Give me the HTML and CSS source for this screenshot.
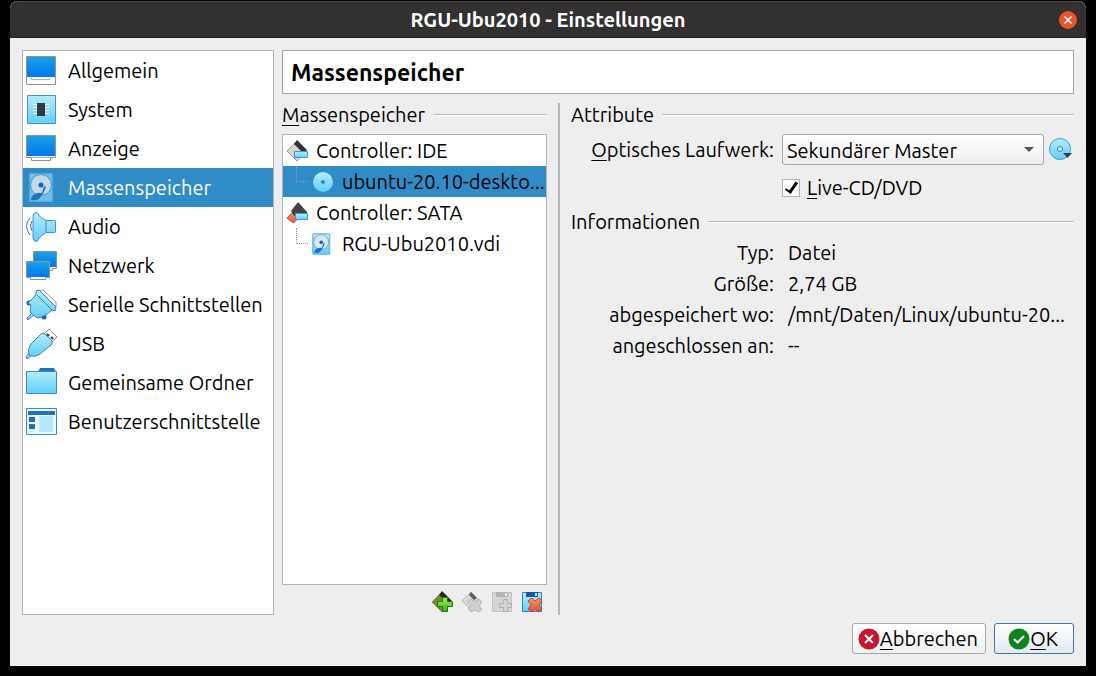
FILE: index.html
```html
<!DOCTYPE html>
<html lang="de">
<head>
  <meta charset="utf-8"/>
  <title>RGU-Ubu2010 - Einstellungen</title>
  <link rel="stylesheet" href="styles.css">
</head>
<body>

<!-- shared gradients and symbols -->
<svg class="defs" width="0" height="0" aria-hidden="true">
  <defs>
    <linearGradient id="screen" x1="0" y1="0" x2="0" y2="1"><stop offset="0" stop-color="#1ba0e4"/><stop offset="1" stop-color="#0078f0"/></linearGradient>
    <linearGradient id="light" x1="0" y1="0" x2="0" y2="1"><stop offset="0" stop-color="#b4ecfb"/><stop offset="1" stop-color="#62cffa"/></linearGradient>
    <linearGradient id="green" x1="0" y1="0" x2="0" y2="1"><stop offset="0" stop-color="#a2ee55"/><stop offset="1" stop-color="#3fae12"/></linearGradient>
    <linearGradient id="red" x1="0" y1="0" x2="0" y2="1"><stop offset="0" stop-color="#ff9468"/><stop offset="1" stop-color="#e5502c"/></linearGradient>
    <symbol id="disk" viewBox="0 0 32 32">
      <rect x="4" y="1" width="24" height="29" rx="1" fill="url(#light)" stroke="#3d8fce"/>
      <circle cx="16" cy="13" r="10.500" fill="#d5e8f4" stroke="#5c9cd0"/>
      <circle cx="16" cy="13" r="2.500" fill="#1d62ae"/>
      <path d="M21 15l-3 7-4 5q-4 2-8 1 0-4 4-6 4-2 7-1l2-7z" fill="#2272c3"/>
    </symbol>
    <symbol id="disk-selected" viewBox="0 0 32 32">
      <rect x="4" y="1" width="24" height="29" rx="1" fill="#70bee6" stroke="#3a8dcc"/>
      <circle cx="16" cy="13" r="10.500" fill="#c2d9e8" stroke="#5295c8"/>
      <circle cx="16" cy="13" r="2.500" fill="#1d62ae"/>
      <path d="M21 15l-3 7-4 5q-4 2-8 1 0-4 4-6 4-2 7-1l2-7z" fill="#2272c3"/>
    </symbol>
  </defs>
</svg>

<div class="window">
  <header class="titlebar">
    <h1>RGU-Ubu2010 - Einstellungen</h1>
    <button class="close" aria-label="Schließen">
      <svg width="18" height="18" viewBox="0 0 18 18"><circle cx="9" cy="9" r="9" fill="#e9542a"/><path d="M5.500 5.500l7 7m0-7l-7 7" stroke="#fff" stroke-width="1.500"/></svg>
    </button>
  </header>

  <div class="content">
    <nav class="sidebar">
      <button class="nav-item">
        <svg class="icon" viewBox="0 0 32 32"><path d="M1.500 1.500h29v28h-29z" fill="#fff" stroke="#8f9399"/><path d="M2 2h28v20H2z" fill="url(#screen)"/><path d="M6 23v1.500h19V23" fill="none" stroke="#a2b4cc"/></svg>
        Allgemein
      </button>
      <button class="nav-item">
        <svg class="icon" viewBox="0 0 32 32"><path d="M2.500 1.500h28v28h-28z" fill="url(#light)" stroke="#4394c8"/><path d="M8 10.500h16M8 13.500h16M8 16.500h16M8 19.500h16" stroke="#fff"/><path d="M12 9h8v13h-8z" fill="#343841"/></svg>
        System
      </button>
      <button class="nav-item">
        <svg class="icon" viewBox="0 0 32 32"><path d="M1.500 2.500h29v22h-5v3h-19v-3h-5z" fill="#fff" stroke="#8f9399"/><path d="M2 3h28v20H2z" fill="url(#screen)"/><path d="M6 24.500h20" stroke="#8ab2dc"/></svg>
        Anzeige
      </button>
      <button class="nav-item selected">
        <svg class="icon" viewBox="0 0 32 32"><use href="#disk-selected"/></svg>
        Massenspeicher
      </button>
      <button class="nav-item">
        <svg class="icon" viewBox="0 0 32 32"><path d="M5 7q-7 8 0 17M7 10q-3 5 0 10" fill="none" stroke="#2c78b5"/><path d="M12 1.500q-4 0-4 4v21q0 4 4 4 2-5 9-9h8.500q1 0 1-1v-10q0-1-1-1H21q-7-3-9-8z" fill="url(#light)" stroke="#438cc4"/><path d="M21 9.500v12" stroke="#438cc4"/></svg>
        Audio
      </button>
      <button class="nav-item">
        <svg class="icon" viewBox="0 0 32 32"><path d="M8.500 1.500h23v17h-4v2H12v-2H8.500z" fill="#fff" stroke="#8f9399"/><path d="M9 2h22v15H9z" fill="url(#screen)"/><path d="M1.500 11.500h23v16h-4v2h-15v-2h-4z" fill="#fff" stroke="#8f9399"/><path d="M2 12h22v15H2z" fill="url(#screen)"/></svg>
        Netzwerk
      </button>
      <button class="nav-item">
        <svg class="icon" viewBox="0 0 32 32"><path d="M15 2l3-1 13 12v5z" fill="#fff" stroke="#a89aa5"/><path d="M7 24l-5 5 1 2 6-5" fill="url(#light)" stroke="#3484bd"/><circle cx="4" cy="14" r="2.500" fill="#175dae"/><circle cx="19" cy="28" r="2.500" fill="#175dae"/><path d="M11 2l3-1 17 17-1 4-3-1-5 4-5 3-5 1-7-6 1-7-3-2 6-6 2-3z" fill="url(#light)" stroke="#3484bd"/><path d="M12 6l15 15" stroke="#3484bd"/></svg>
        Serielle Schnittstellen
      </button>
      <button class="nav-item">
        <svg class="icon" viewBox="0 0 32 32"><path d="M18 7l6-6 8 8-6 6z" fill="#fff" stroke="#969199"/><path d="M22 6l2 2M26 9l2 2" stroke="#30343b" stroke-width="2"/><path d="M4 25l-3 4 1 2 5-4" fill="url(#light)" stroke="#3484bd"/><path d="M16 6q2-2 4 0l7 7q1 2-1 4L15 26q-6 4-11 1-2-5 2-11z" fill="url(#light)" stroke="#3484bd"/></svg>
        USB
      </button>
      <button class="nav-item">
        <svg class="icon" viewBox="0 0 32 32"><path d="M13 5l2-4h14l2 4z" fill="#236fbe"/><path d="M1.500 4.500h30v22h-30z" fill="url(#light)" stroke="#398bc6"/></svg>
        Gemeinsame Ordner
      </button>
      <button class="nav-item">
        <svg class="icon" viewBox="0 0 32 32"><path d="M1.500 2.500h30v26h-30z" fill="#e9f8fd" stroke="#398bc6"/><path d="M3 5h27v4H3zM4 11h6v5H4zM4 18h6v5H4z" fill="#236fbe"/><path d="M14 10h14v16H14z" fill="#b5e8fa"/></svg>
        Benutzerschnittstelle
      </button>
    </nav>

    <main class="page">
      <h2 class="page-title">Massenspeicher</h2>

      <div class="panes">
        <section class="storage">
          <h3 class="group"><span><u>M</u>assenspeicher</span></h3>
          <div class="tree">
            <button class="row">
              <svg width="22" height="22" viewBox="0 0 22 22"><path d="M1 11L11 1l10 10-10 10z" fill="#ddd5d3" stroke="#a89e9c"/><path d="M11 0l10 10-4 3-9-9z" fill="#35302f"/><path d="M8.500 11.500h13v6h-13z" fill="url(#light)" stroke="#3c9bd5"/></svg>
              Controller: IDE
            </button>
            <button class="row child selected">
              <svg width="22" height="22" viewBox="0 0 22 22"><circle cx="11" cy="11" r="10" fill="url(#light)"/><circle cx="11" cy="11" r="2" fill="#2382b8" stroke="#65b4d9"/></svg>
              <span>ubuntu-20.10-deskto...</span>
            </button>
            <button class="row">
              <svg width="22" height="22" viewBox="0 0 22 22"><path d="M1 16l5-5 6 6-5 4z" fill="url(#red)" stroke="#b95a42"/><path d="M12 0l9 10v4H8L5 9z" fill="#45413f"/><path d="M9.500 11.500h12v6h-12z" fill="url(#light)" stroke="#3c9bd5"/></svg>
              Controller: SATA
            </button>
            <button class="row child">
              <svg width="22" height="22" viewBox="3 0 26 31" preserveAspectRatio="xMinYMid"><use href="#disk" width="32" height="32"/></svg>
              <span>RGU-Ubu2010.vdi</span>
            </button>
          </div>
          <div class="toolbar">
            <button aria-label="Controller hinzufügen">
              <svg width="22" height="22" viewBox="0 0 22 22"><path d="M1 11L11 1l10 10-10 10z" fill="#67942d" stroke="#9b813b"/><path d="M11 0l10 10-3 3-10-9z" fill="#252525"/><path d="M11.500 6.500h5v4h5v5h-5v5h-5v-5h-5v-5h5z" fill="url(#green)" stroke="#237812"/></svg>
            </button>
            <button aria-label="Controller entfernen" disabled>
              <svg width="22" height="22" viewBox="0 0 22 22"><path d="M1 10l9-9 10 10-9 9z" fill="#d8d8d8" stroke="#bababa"/><path d="M10 1l6 6-3 2-5-5z" fill="#5c5c5c"/><path d="M10 8l4 3 4-3 3 3-3 4 3 3-3 3-4-2-4 2-3-3 3-3-3-4z" fill="#cfcfcf" stroke="#b5b5b5"/></svg>
            </button>
            <button aria-label="Anhang hinzufügen" disabled>
              <svg width="22" height="22" viewBox="0 0 22 22"><path d="M1.500 1.500h19v19h-19z" fill="#d5d5d5" stroke="#c4c4c4"/><path d="M5 1h12v5H5z" fill="#b3b3b3"/><path d="M14 2h2v3h-2z" fill="#eee"/><path d="M12.500 8.500h4v4h4v4h-4v4h-4v-4h-4v-4h4z" fill="#d2d2d2" stroke="#b0b0b0"/></svg>
            </button>
            <button aria-label="Anhang entfernen">
              <svg width="22" height="22" viewBox="0 0 22 22"><path d="M1.500 1.500h19v19h-19z" fill="url(#light)" stroke="#2884c9"/><path d="M5 1h12v5H5z" fill="#1758a3"/><path d="M14 2h2v3h-2z" fill="#b2e4fa"/><path d="M11 7l3 3 4-3 3 3-3 4 3 4-3 3-4-3-3 3-4-3 3-4-3-4z" fill="url(#red)" stroke="#c2472f"/></svg>
            </button>
          </div>
        </section>

        <section class="details">
          <h3 class="group"><span>Attribute</span></h3>
          <div class="form">
            <label class="name" for="drive"><u>O</u>ptisches Laufwerk:</label>
            <div class="drive">
              <div class="combo">
                <select id="drive">
                  <option>Sekundärer Master</option>
                </select>
              </div>
              <button class="choose" aria-label="Abbild auswählen">
                <svg width="24" height="24" viewBox="0 0 24 24"><circle cx="11" cy="11" r="10.500" fill="url(#light)" stroke="#3ba0d6"/><circle cx="11" cy="11" r="2.500" fill="#c5effc" stroke="#3487b8"/><path d="M14 15h9l-4.500 5z" fill="#304048"/></svg>
              </button>
            </div>
            <div class="check">
              <input type="checkbox" id="live" checked>
              <label for="live"><u>L</u>ive-CD/DVD</label>
            </div>
          </div>

          <h3 class="group"><span>Informationen</span></h3>
          <dl class="info">
            <dt>Typ:</dt><dd>Datei</dd>
            <dt>Größe:</dt><dd>2,74 GB</dd>
            <dt>abgespeichert wo:</dt><dd>/mnt/Daten/Linux/ubuntu-20...</dd>
            <dt>angeschlossen an:</dt><dd>--</dd>
          </dl>
        </section>
      </div>
    </main>
  </div>

  <footer class="actions">
    <button class="btn">
      <svg width="22" height="22" viewBox="0 0 22 22"><circle cx="11" cy="11" r="10.500" fill="#c6162e"/><path d="M7 7l8 8m0-8l-8 8" stroke="#fff" stroke-width="2"/></svg>
      <span><u>A</u>bbrechen</span>
    </button>
    <button class="btn default">
      <svg width="22" height="22" viewBox="0 0 22 22"><circle cx="11" cy="11" r="10.500" fill="#0e8420"/><path d="M6 11l3.500 3.500L16 8" fill="none" stroke="#fff" stroke-width="2"/></svg>
      <span><u>O</u>K</span>
    </button>
  </footer>
</div>

</body>
</html>
```
FILE: styles.css
```css
*, *::before, *::after {
  box-sizing: border-box;
}
body {
  margin: 0;
  padding: 1px 10px 10px;
  min-height: 100vh;
  display: flex;
  background: #000;
  color: #000;
  font-family: Ubuntu, "Noto Sans", sans-serif;
  font-size: 20px;
  line-height: 31px;
}
h1, h2, h3, dl, dd {
  margin: 0;
}
button, select {
  font: inherit;
  color: inherit;
}
button {
  padding: 0;
  border: none;
  background: none;
  text-align: left;
}
svg {
  display: block;
  flex: none;
}
u {
  text-decoration-thickness: 1px;
  text-underline-offset: 3px;
  text-decoration-skip-ink: none;
}
.defs {
  position: absolute;
}
.window {
  flex: 1;
  min-width: 0;
  display: flex;
  flex-direction: column;
  background: #eee;
  border-radius: 8px 8px 0 0;
}

/* title bar */
.titlebar {
  display: grid;
  grid-template-columns: 1fr auto 1fr;
  align-items: center;
  height: 37px;
  padding: 0 9px;
  background: #323031;
  border-top: 1px solid #4a4849;
  border-bottom: 1px solid #252324;
  border-radius: 8px 8px 0 0;
  color: #fff;
}
.titlebar h1 {
  grid-column: 2;
  font-size: 20px;
}
.close {
  justify-self: end;
}

.content {
  flex: 1;
  display: flex;
  gap: 8px;
  padding: 12px 12px 8px;
}

/* category list */
.sidebar {
  flex: none;
  width: 252px;
  background: #fff;
  border: 1px solid #b4b4b4;
}
.nav-item {
  display: flex;
  align-items: center;
  gap: 11px;
  width: 100%;
  height: 39px;
  padding-left: 2px;
  white-space: nowrap;
}
.icon {
  width: 32px;
  height: 32px;
}
.selected {
  background: #308cc6;
}
.nav-item.selected {
  color: #fff;
}

.page {
  flex: 1;
  min-width: 0;
  display: flex;
  flex-direction: column;
}
.page-title {
  height: 44px;
  padding-left: 8px;
  background: #fff;
  border: 1px solid #a4a4a4;
  font-size: 23px;
  line-height: 43px;
}
.panes {
  flex: 1;
  display: flex;
  padding-top: 9px;
}
.group {
  display: flex;
  align-items: center;
  gap: 8px;
  height: 23px;
  font-size: 20px;
  font-weight: normal;
}
.group::after {
  content: "";
  flex: 1;
  border-top: 1px solid #b8b8b8;
  border-bottom: 1px solid #fff;
}

/* storage tree */
.storage {
  flex: none;
  width: 278px;
  display: flex;
  flex-direction: column;
  padding-right: 11px;
  border-right: 2px solid #b8b8b8;
}
.tree {
  flex: 1;
  margin-top: 8px;
  background: #fff;
  border: 1px solid #b4b4b4;
}
.row {
  display: flex;
  align-items: center;
  gap: 8px;
  width: 100%;
  height: 31px;
  padding-left: 3px;
  white-space: nowrap;
  overflow: hidden;
}
.child {
  padding-left: 13px;
}
.child::before {
  content: "";
  align-self: flex-start;
  width: 12px;
  height: 16px;
  margin-right: -4px;
  border: 1px dotted #999;
  border-width: 0 0 1px 1px;
}
.toolbar {
  display: flex;
  justify-content: flex-end;
  gap: 8px;
  padding: 6px 4px 2px 0;
}

/* attributes */
.details {
  flex: 1;
  min-width: 0;
  padding-left: 11px;
}
.form {
  display: grid;
  grid-template-columns: 203px 1fr;
  column-gap: 8px;
  row-gap: 7px;
  padding: 8px 0 7px;
}
.name, .info dt {
  text-align: right;
}
.drive {
  display: flex;
  align-items: center;
  gap: 5px;
  padding-right: 1px;
}
.combo {
  position: relative;
  flex: 1;
}
.combo::after {
  content: "";
  position: absolute;
  top: 13px;
  right: 10px;
  border: 5px solid transparent;
  border-top-color: #555;
  border-bottom: none;
}
.combo select {
  display: block;
  appearance: none;
  width: 100%;
  height: 31px;
  padding: 0 4px;
  border: 1px solid #a8a8a8;
  border-radius: 3px;
  background: linear-gradient(#fff, #eee);
}
.check {
  grid-column: 2;
  display: flex;
  align-items: center;
  gap: 7px;
}
.check input {
  appearance: none;
  display: grid;
  justify-content: center;
  width: 18px;
  height: 18px;
  margin: 0;
  background: #fff;
  border: 1px solid #b4b4b4;
}
.check input:checked::before {
  content: "";
  width: 7px;
  height: 13px;
  border: solid #000;
  border-width: 0 3px 2px 0;
  transform: rotate(35deg);
}
.info {
  display: grid;
  grid-template-columns: 203px 1fr;
  column-gap: 14px;
  padding-top: 4px;
}
.info dd {
  overflow: hidden;
  white-space: nowrap;
}

/* buttons */
.actions {
  display: flex;
  justify-content: flex-end;
  gap: 8px;
  padding: 0 12px 12px;
}
.btn {
  display: flex;
  align-items: center;
  justify-content: center;
  height: 31px;
  min-width: 80px;
  padding: 0 7px 0 5px;
  border: 1px solid #a8a8a8;
  border-radius: 3px;
  background: linear-gradient(#fff, #f0f0f0);
}
.default {
  border-color: #3c7b9e;
  background: linear-gradient(#fff, #e2eaf0);
}
```
